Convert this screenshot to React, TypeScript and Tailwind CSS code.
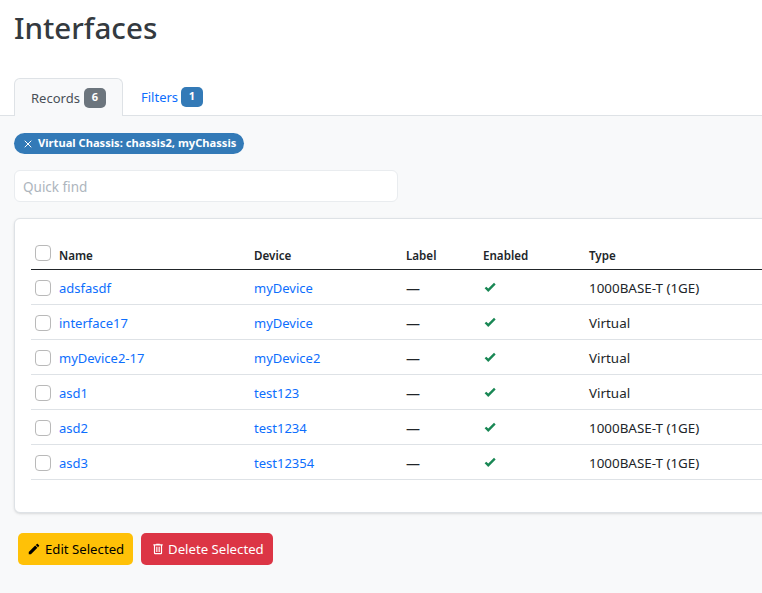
import { X } from "lucide-react";

const rows = [
  ["adsfasdf", "myDevice", "1000BASE-T (1GE)"],
  ["interface17", "myDevice", "Virtual"],
  ["myDevice2-17", "myDevice2", "Virtual"],
  ["asd1", "test123", "Virtual"],
  ["asd2", "test1234", "1000BASE-T (1GE)"],
  ["asd3", "test12354", "1000BASE-T (1GE)"],
];

const Box = () => (
  <span className="block w-4 h-4 rounded-[4px] border border-[#b9b9b9] bg-white" />
);

export default function App() {
  return (
    <div
      className="w-[762px] h-[593px] overflow-hidden bg-white text-[#212529] text-[14px]"
      style={{ fontFamily: '"Noto Sans", sans-serif' }}
    >
      <div className="h-[78px] pl-[14px] pt-[7px]">
        <h1 className="text-[29.6px] leading-[42px] font-medium text-[#343a40]">Interfaces</h1>
      </div>
      <div className="flex h-[38px] pl-[14px] border-b border-[#dee2e6]">
        <div className="flex items-center gap-[4px] w-[109px] h-[38px] pl-[16px] pb-px bg-[#f8f9fa] border border-b-0 border-[#dee2e6] rounded-t-[6px] text-[#495057] text-[13px]">
          <span className="pt-[4px]">Records</span>
          <span className="w-[22px] h-[20px] mt-px flex items-center justify-center rounded-[5px] bg-[#6c757d] text-white text-[11px] font-bold">6</span>
        </div>
        <div className="flex items-center gap-[4px] pl-[18px] text-[#0d6efd] text-[13px]">
          <span className="pt-[2px] w-[36px]">Filters</span>
          <span className="w-[22px] h-[20px] flex items-center justify-center rounded-[5px] bg-[#337ab7] text-white text-[11px] font-bold">1</span>
        </div>
      </div>
      <div className="h-[478px] bg-[#f8f9fa] px-[14px] pt-[17px]">
        <div className="w-[230px] h-[21px] flex items-center pl-[8px] gap-[4px] rounded-full bg-[#337ab7] text-white text-[11.15px] font-bold whitespace-nowrap">
          <X size={12} strokeWidth={2} />
          Virtual Chassis: chassis2, myChassis
        </div>
        <div className="mt-[16px] w-[384px] h-[32px] flex items-center pl-[8px] pt-[2px] bg-white border border-[#e9ecef] rounded-[6px] text-[#adb5bd] text-[13.5px]">
          Quick find
        </div>
        <div className="mt-[16px] w-[800px] h-[295px] bg-white border border-[#dee2e6] rounded-[6px] shadow-sm pl-4 pt-[17px]">
          <table className="w-[770px] table-fixed border-collapse text-[13px]">
            <colgroup>
              <col className="w-[28px]" />
              <col className="w-[195px]" />
              <col className="w-[152px]" />
              <col className="w-[77px]" />
              <col className="w-[106px]" />
              <col />
            </colgroup>
            <thead>
              <tr className="h-[33px] border-b border-[#212529] text-[11.6px] text-left">
                <th className="pl-1 align-top pt-[9px]"><Box /></th>
                <th className="font-semibold pt-[6px]">Name</th>
                <th className="font-semibold pt-[6px]">Device</th>
                <th className="font-semibold pt-[6px]">Label</th>
                <th className="font-semibold pt-[6px]">Enabled</th>
                <th className="font-semibold pt-[6px]">Type</th>
              </tr>
            </thead>
            <tbody>
              {rows.map((r) => (
                <tr key={r[0]} className="h-[35px] border-b border-[#dee2e6]">
                  <td className="pl-1 pt-[2px]"><Box /></td>
                  <td className="text-[#0d6efd] pt-1">{r[0]}</td>
                  <td className="text-[#0d6efd] pt-1">{r[1]}</td>
                  <td className="pt-1 text-[14px]">—</td>
                  <td>
                    <svg width="14" height="14" viewBox="0 0 24 24" fill="#198754"><path d="M9,20.42L2.79,14.21L5.62,11.38L9,14.77L18.88,4.88L21.71,7.71L9,20.42Z" /></svg>
                  </td>
                  <td className="pt-1 text-[13.4px]">{r[2]}</td>
                </tr>
              ))}
            </tbody>
          </table>
        </div>
        <div className="mt-[20px] ml-1 flex gap-2">
          <div className="w-[115px] h-[32px] flex items-center gap-[4px] pl-[9px] rounded-[5px] bg-[#ffc107] text-black text-[13.2px]">
            <svg width="14" height="14" viewBox="0 0 24 24" fill="currentColor"><path d="M20.71,7.04C21.1,6.65 21.1,6 20.71,5.63L18.37,3.29C18,2.9 17.35,2.9 16.96,3.29L15.12,5.12L18.87,8.87M3,17.25V21H6.75L17.81,9.93L14.06,6.18L3,17.25Z" /></svg>
            <span className="pt-[2px]">Edit Selected</span>
          </div>
          <div className="w-[132px] h-[32px] flex items-center gap-[3px] pl-[10px] rounded-[5px] bg-[#dc3545] text-white text-[13.2px]">
            <svg width="14" height="14" viewBox="0 0 24 24" fill="currentColor"><path d="M9,3V4H4V6H5V19A2,2 0 0,0 7,21H17A2,2 0 0,0 19,19V6H20V4H15V3H9M7,6H17V19H7V6M9,8V17H11V8H9M13,8V17H15V8H13Z" /></svg>
            <span className="pt-[2px]">Delete Selected</span>
          </div>
        </div>
      </div>
    </div>
  );
}
